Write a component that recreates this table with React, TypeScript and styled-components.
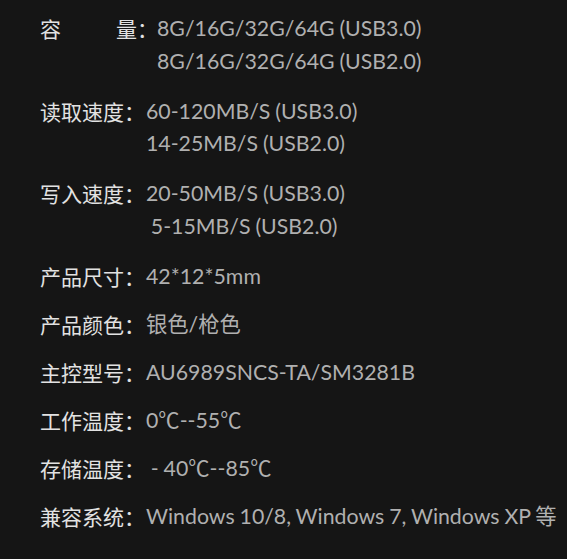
import React from "react";
import styled, { createGlobalStyle } from "styled-components";

const GlobalStyle = createGlobalStyle`
  html, body {
    margin: 0;
    padding: 0;
    background: #151515;
  }
`;

const Sheet = styled.div`
  width: 567px;
  height: 559px;
  box-sizing: border-box;
  padding: 12px 0 0 40px;
  background: #151515;
  display: flex;
  flex-direction: column;
  gap: 15.5px;
  font-family: Lato, "Noto Sans CJK SC", sans-serif;
`;

const Row = styled.div<{ multi?: boolean }>`
  display: flex;
  align-items: flex-start;
  line-height: 32.5px;
  margin-bottom: ${({ multi }) => (multi ? "2px" : "0")};
`;

const Label = styled.div<{ spread?: boolean }>`
  display: flex;
  justify-content: ${({ spread }) => (spread ? "space-between" : "flex-start")};
  width: ${({ spread }) => (spread ? "97px" : "auto")};
  font-family: "Noto Sans CJK SC", sans-serif;
  font-size: 21px;
  color: #e2e2e2;
  white-space: nowrap;
`;

const Colon = styled.span`
  font-family: "Noto Sans CJK SC", sans-serif;
  font-size: 21px;
  color: #e2e2e2;
  width: 21px;
  flex: none;
`;

const Values = styled.div<{ wide?: boolean }>`
  display: flex;
  flex-direction: column;
  margin-left: ${({ wide }) => (wide ? "-1px" : "1px")};
  font-size: 21.3px;
  color: #b0b0b0;
  white-space: pre;
  word-spacing: -0.6px;
`;

type Spec = { label: string[]; lines: string[] };

const specs: Spec[] = [
  { label: ["容", "量"], lines: ["8G/16G/32G/64G (USB3.0)", "8G/16G/32G/64G (USB2.0)"] },
  { label: ["读取速度"], lines: ["60-120MB/S (USB3.0)", "14-25MB/S (USB2.0)"] },
  { label: ["写入速度"], lines: ["20-50MB/S (USB3.0)", " 5-15MB/S (USB2.0)"] },
  { label: ["产品尺寸"], lines: ["42*12*5mm"] },
  { label: ["产品颜色"], lines: ["银色/枪色"] },
  { label: ["主控型号"], lines: ["AU6989SNCS-TA/SM3281B"] },
  { label: ["工作温度"], lines: ["0℃--55℃"] },
  { label: ["存储温度"], lines: [" - 40℃--85℃"] },
  { label: ["兼容系统"], lines: ["Windows 10/8, Windows 7, Windows XP 等"] },
];

const App: React.FC = () => (
  <>
    <GlobalStyle />
    <Sheet>
      {specs.map((s) => (
        <Row key={s.label.join("")} multi={s.lines.length > 1}>
          <Label spread={s.label.length > 1}>
            {s.label.map((t) => (
              <span key={t}>{t}</span>
            ))}
          </Label>
          <Colon>：</Colon>
          <Values wide={s.label.length > 1}>
            {s.lines.map((l) => (
              <span key={l}>{l}</span>
            ))}
          </Values>
        </Row>
      ))}
    </Sheet>
  </>
);

export default App;
